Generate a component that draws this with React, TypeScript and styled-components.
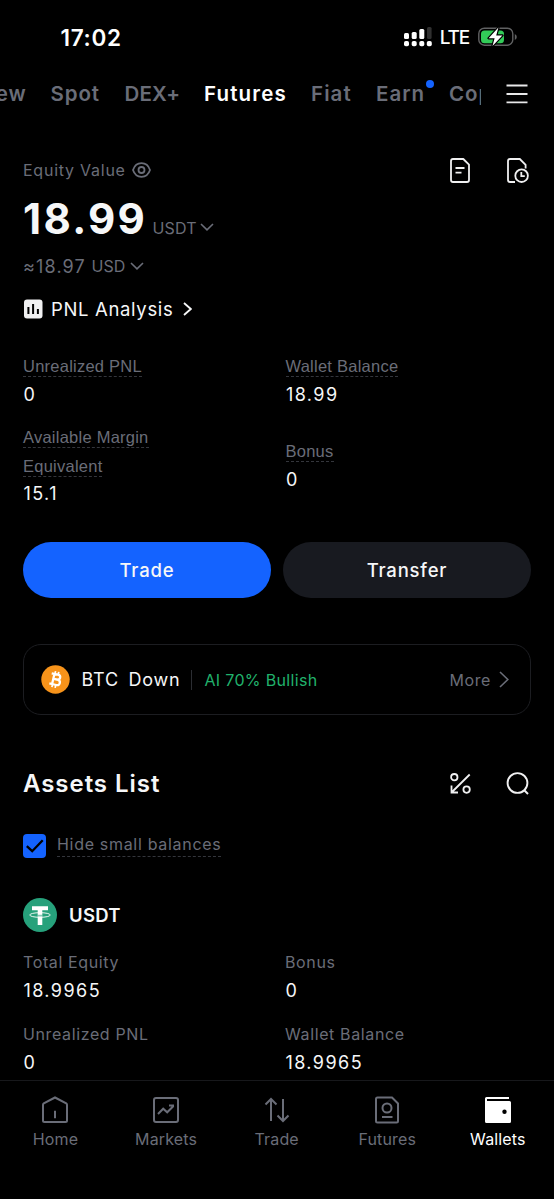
import React from "react";
import styled, { createGlobalStyle } from "styled-components";

const GlobalStyle = createGlobalStyle`
  * { box-sizing: border-box; }
  body { margin: 0; background: #000; }
`;

const gray = "#6a6d78";
const white = "#f6f7f8";

const Screen = styled.div`
  width: 554px;
  height: 1199px;
  overflow: hidden;
  display: flex;
  flex-direction: column;
  background: #000;
  color: ${white};
  font-family: Inter, "Liberation Sans", sans-serif;
  white-space: nowrap;
`;

const StatusBar = styled.div`
  height: 74px;
  flex: none;
  display: flex;
  align-items: center;
  justify-content: space-between;
  padding: 0 37px 0 60.5px;
`;

const Clock = styled.span`
  font-size: 22.5px;
  font-weight: 600;
  letter-spacing: 0.7px;
  color: #fff;
`;

const StatusIcons = styled.div`
  display: flex;
  align-items: center;
`;

const Carrier = styled.span`
  font-size: 19px;
  font-weight: 500;
  letter-spacing: -1.2px;
  color: #fff;
  margin: 1px 9px 0 7.5px;
`;

const TabBar = styled.nav`
  height: 39px;
  flex: none;
  display: flex;
  align-items: center;
  padding-right: 26px;
  justify-content: space-between;
`;

const TabStrip = styled.div`
  width: 481px;
  height: 39px;
  overflow: hidden;
  display: flex;
  align-items: center;
  gap: 24px;
`;

const Tab = styled.span<{ $active?: boolean; $width: number; $track?: number }>`
  flex: none;
  width: ${(p) => p.$width}px;
  display: flex;
  position: relative;
  font-size: 20.5px;
  font-weight: 600;
  letter-spacing: ${(p) => p.$track ?? 0.9}px;
  color: ${(p) => (p.$active ? "#fff" : gray)};
`;

const CutTab = styled(Tab)`
  justify-content: flex-end;
`;

const TabDot = styled.i`
  position: absolute;
  right: -9px;
  top: -1px;
  width: 8px;
  height: 8px;
  border-radius: 50%;
  background: #1463ff;
`;

const Content = styled.main`
  flex: 1;
  min-height: 0;
  overflow: hidden;
  padding: 41px 23px 0;
`;

const EquityRow = styled.div`
  height: 32px;
  display: flex;
  align-items: center;
  justify-content: space-between;
  padding-right: 2px;
`;

const Caption = styled.span`
  font-size: 16px;
  letter-spacing: 0.75px;
  color: ${gray};
`;

const Inline = styled.div<{ $gap: number }>`
  display: flex;
  align-items: center;
  gap: ${(p) => p.$gap}px;
`;

const Balance = styled.div`
  height: 62px;
  display: flex;
  align-items: baseline;
  padding-top: 7px;
`;

const BalanceValue = styled.span`
  font-size: 42px;
  line-height: 52px;
  font-weight: 700;
  letter-spacing: 2.3px;
  margin-right: 5.5px;
`;

const Currency = styled.span<{ $gap?: number }>`
  font-size: 16px;
  letter-spacing: 0.1px;
  color: ${gray};
  margin-right: ${(p) => p.$gap ?? 5}px;
`;

const FiatRow = styled.div`
  height: 36px;
  display: flex;
  align-items: center;
  color: ${gray};
`;

const FiatValue = styled.span`
  font-size: 18px;
  letter-spacing: 1.15px;
  margin-right: 5.5px;
`;

const PnlLink = styled.div`
  height: 49px;
  display: flex;
  align-items: center;
  font-size: 18.5px;
  letter-spacing: 0.66px;
`;

const PnlText = styled.span`
  margin: 0 10px 0 8px;
`;

const StatGrid = styled.div<{ $top: number }>`
  display: grid;
  grid-template-columns: 262.5px 1fr;
  align-items: center;
  row-gap: 14.5px;
  margin-top: ${(p) => p.$top}px;
`;

const StatLabel = styled.div`
  width: 140px;
  white-space: normal;
  font-family: "Liberation Sans", Arial, sans-serif;
  font-size: 16.5px;
  line-height: 28.5px;
  letter-spacing: 0.24px;
  color: ${gray};
`;

const Dashed = styled.span`
  padding-bottom: 1px;
  border-bottom: 1px dashed #34363c;
`;

const StatValue = styled.div`
  font-size: 18px;
  line-height: 28px;
  letter-spacing: 1.45px;
  text-indent: 0.4px;
`;

const Actions = styled.div`
  display: grid;
  grid-template-columns: 1fr 1fr;
  gap: 12px;
  margin-top: 33.5px;
`;

const ActionButton = styled.button<{ $primary?: boolean }>`
  height: 56.5px;
  padding: 0;
  border: 0;
  border-radius: 29px;
  background: ${(p) => (p.$primary ? "#1463ff" : "#181a20")};
  color: ${white};
  font: 450 18.5px Inter, sans-serif;
  letter-spacing: 0.8px;
`;

const SignalCard = styled.div`
  height: 71px;
  margin-top: 46px;
  padding: 0 21px 0 16.5px;
  display: flex;
  align-items: center;
  border: 1.5px solid #1c1d21;
  border-radius: 18px;
`;

const SignalName = styled.span`
  margin-left: 12px;
  display: flex;
  gap: 9.5px;
  font-size: 18px;
  letter-spacing: 0.8px;
`;

const Divider = styled.i`
  width: 1px;
  height: 20px;
  margin: 0 12px 0 11px;
  background: #2b2d32;
`;

const Bullish = styled.span`
  flex: 1;
  font-size: 16px;
  letter-spacing: 0.33px;
  color: #20b26c;
`;

const SectionHead = styled.div`
  height: 40px;
  margin-top: 48.5px;
  display: flex;
  align-items: center;
  justify-content: space-between;
  padding-right: 2px;
`;

const SectionTitle = styled.h2`
  margin: 0;
  font-size: 24px;
  font-weight: 600;
  letter-spacing: 0.95px;
`;

const FilterRow = styled.label`
  height: 26px;
  margin-top: 29px;
  display: flex;
  align-items: center;
  gap: 11px;
`;

const FilterText = styled.span`
  height: 24px;
  margin-top: -1px;
  font-size: 16px;
  line-height: 23px;
  letter-spacing: 0.69px;
  color: ${gray};
  border-bottom: 1px dashed #34363c;
`;

const CoinRow = styled.div`
  height: 36px;
  margin-top: 38.5px;
  display: flex;
  align-items: center;
  gap: 12px;
  font-size: 18.5px;
  font-weight: 600;
  letter-spacing: 0.3px;
`;

const AssetGrid = styled(StatGrid)`
  grid-template-columns: 262px 1fr;
`;

const AssetLabel = styled.div`
  font-size: 16px;
  line-height: 29.5px;
  letter-spacing: 0.62px;
  color: ${gray};
`;

const BottomNav = styled.nav`
  height: 119px;
  flex: none;
  display: grid;
  grid-template-columns: repeat(5, 110.6px);
  border-top: 1px solid #17181b;
`;

const NavItem = styled.div<{ $active?: boolean }>`
  display: flex;
  flex-direction: column;
  align-items: center;
  padding: 15px 0 0 0.4px;
  gap: 3px;
  font-size: 16px;
  line-height: 24px;
  letter-spacing: 0.15px;
  color: ${(p) => (p.$active ? "#fff" : gray)};
`;

const Chevron = ({ down = false, w, h, sw = 1.6 }: { down?: boolean; w: number; h: number; sw?: number }) => (
  <svg width={w} height={h} fill="none" stroke="currentColor" strokeWidth={sw}>
    <path d={down ? `M1 1L${w / 2} ${h - 1.2}L${w - 1} 1` : `M1 1L${w - 1.2} ${h / 2}L1 ${h - 1}`} />
  </svg>
);

const GrayChevron = styled.span<{ $drop?: number }>`
  display: flex;
  align-self: center;
  padding-top: ${(p) => p.$drop ?? 0}px;
  color: ${gray};
`;

const More = styled.span`
  margin-right: 8px;
  font-size: 16px;
  letter-spacing: 0.6px;
  color: ${gray};
`;

const Signal = () => (
  <svg width="28" height="20" fill="#fff">
    <rect x="0" y="6" width="5" height="6" rx="1.5" />
    <rect x="7.7" y="5" width="5" height="7" rx="1.5" />
    <rect x="15.3" y="2" width="5" height="10" rx="1.5" />
    <rect x="23" y="0" width="4.6" height="12" rx="1.5" fill="#303030" />
    {[0, 7.7, 15.3, 22.8].map((x) => (
      <rect key={x} x={x} y="14" width="5" height="5.2" rx="1.8" />
    ))}
  </svg>
);

const Battery = () => (
  <svg width="39" height="20" viewBox="0 0 39 20">
    <rect x="0.8" y="1.2" width="34" height="17" rx="5.5" fill="none" stroke="#606162" strokeWidth="1.4" />
    <path d="M36.8 7v6q2-1 2-3t-2-3Z" fill="#606162" />
    <rect x="3" y="3.4" width="23" height="12.8" rx="3.5" fill="#32cc58" />
    <path d="M20.4.6 10.6 11.2h6L14.5 19 24.4 8.4h-6.2Z" fill="#fff" stroke="#000" strokeWidth="2.4" paintOrder="stroke" strokeLinejoin="round" />
  </svg>
);

const MenuIcon = () => (
  <svg width="22" height="20" stroke="#e8e8e9" strokeWidth="1.9">
    <path d="M.5 1.5h21M.5 10h21M.5 18.4h21" />
  </svg>
);

const EyeIcon = () => (
  <svg width="19" height="16" viewBox="0 0 19 16" fill="none" stroke={gray} strokeWidth="1.8">
    <path d="M1 8C2.5 3.5 5.5 1.2 9.5 1.2S16.5 3.5 18 8C16.5 12.5 13.5 14.8 9.5 14.8S2.5 12.5 1 8Z" />
    <circle cx="9.5" cy="8" r="3" />
  </svg>
);

const DocIcon = () => (
  <svg width="20" height="25" viewBox="0 0 20 25" fill="none" stroke="#f0f0f1" strokeWidth="1.8" strokeLinejoin="round">
    <path d="M3 1h10.3L19 6.700V22q0 2-2 2H3q-2 0-2-2V3q0-2 2-2Z" />
    <path d="M5.5 10h9M5.5 14.600h6" />
  </svg>
);

const HistoryIcon = () => (
  <svg width="22" height="25" viewBox="0 0 22 25" fill="none" stroke="#f0f0f1" strokeWidth="1.8">
    <path d="M8 24H3q-2 0-2-2V3q0-2 2-2h9.8L18.6 6.800V10.500" />
    <circle cx="14.6" cy="17.700" r="6.300" />
    <path d="M14.300 14v4.200h3.500" />
  </svg>
);

const ChartBadge = () => (
  <svg width="20" height="20" viewBox="0 0 20 20">
    <rect x="1" y=".5" width="18.500" height="19" rx="3" fill="#f0f0f1" />
    <path d="M5.400 8v7M10.100 5v10M14.900 10v5" stroke="#000" strokeWidth="2" />
  </svg>
);

const BitcoinIcon = () => (
  <svg width="29" height="29" viewBox="0 0 29 29">
    <circle cx="14.500" cy="14.500" r="14.200" fill="#f7931a" />
    <g transform="rotate(13 14.500 14.500)" fill="none" stroke="#fff" strokeWidth="2.300">
      <path d="M9.400 9.300H15.800Q18.600 9.300 18.600 11.700T15.800 14.200H12M12 14.200H16.400Q19.500 14.200 19.500 17T16.400 19.700H9.400M12.200 9.300V19.700" />
      <path d="M12.700 6.300v3M16 6.300v3M12.700 19.700v3M16 19.700v3" strokeWidth="1.700" />
    </g>
  </svg>
);

const FeeIcon = () => (
  <svg width="21" height="21" viewBox="0 0 21 21" fill="none" stroke="#f0f0f1" strokeWidth="1.800">
    <circle cx="4.300" cy="4.200" r="3.200" />
    <circle cx="16.600" cy="16.600" r="3.200" />
    <path d="M19.700 1.500 2 19M1.500 12.500V19.500H8" />
  </svg>
);

const SearchIcon = () => (
  <svg width="23" height="23" viewBox="0 0 23 23" fill="none" stroke="#f0f0f1" strokeWidth="1.900">
    <circle cx="11.500" cy="11" r="9.900" />
    <path d="m18 18 4 4" />
  </svg>
);

const CheckIcon = () => (
  <svg width="23" height="24" viewBox="0 0 23 24">
    <rect width="23" height="24" rx="4" fill="#1463ff" />
    <path d="m3.800 12.200 5.400 5 10.500-11" fill="none" stroke="#000" strokeWidth="2.300" />
  </svg>
);

const TetherIcon = () => (
  <svg width="34" height="34" viewBox="0 0 34 34">
    <circle cx="17" cy="17" r="17" fill="#26a17b" />
    <path d="M9 8.300h16v4H19.300V27h-4.600V12.300H9Z" fill="#fff" />
    <ellipse cx="17" cy="17" rx="10.300" ry="2.300" fill="none" stroke="#fff" strokeWidth=".9" />
    <path d="M14.700 16.800v1.700q2.300.2 4.600 0v-1.700Z" fill="#26a17b" opacity=".55" />
  </svg>
);

const NavIcon = ({ name }: { name: string }) => (
  <svg width="28" height="28" viewBox="0 0 28 28" fill="none" stroke="currentColor" strokeWidth="2">
    {name === "Home" && (
      <path d="M2 8.800Q2 8 2.800 7.400L14 1.500l11.200 5.900q.8.600.8 1.400V24.500q0 1.500-1.500 1.500h-21Q2 26 2 24.500ZM14 14.800v7.500" />
    )}
    {name === "Markets" && (
      <>
        <rect x="2" y="2" width="24" height="24" rx="2" />
        <path d="m6 18 5.200-5.300 4 3.600L21.500 10M17 9.500h5" />
      </>
    )}
    {name === "Trade" && <path d="M8 25V3M2.500 8.500 8 3l5.500 5.500M20 3v22M14.500 19.500 20 25l5.500-5.500" />}
    {name === "Futures" && (
      <>
        <path d="M4.500 1.500H19L25 7.500V25q0 1.500-1.500 1.500h-19Q3 26.500 3 25V3q0-1.500 1.500-1.500Z" />
        <circle cx="14" cy="12" r="4.500" />
        <path d="M9 21h10.500" />
      </>
    )}
    {name === "Wallets" && (
      <>
        <path d="M1 2.500Q1 1 2.500 1H25V3H3V5H25.500Q27 5 27 6.500V25.500Q27 27 25.500 27h-23Q1 27 1 25.500Z" fill="currentColor" stroke="none" />
        <circle cx="20.500" cy="15.700" r="2.200" fill="#000" stroke="none" />
      </>
    )}
  </svg>
);

const stats = [
  ["Unrealized PNL", "0"],
  ["Wallet Balance", "18.99"],
  ["Available Margin Equivalent", "15.1"],
  ["Bonus", "0"],
];

const assetStats = [
  ["Total Equity", "18.9965"],
  ["Bonus", "0"],
  ["Unrealized PNL", "0"],
  ["Wallet Balance", "18.9965"],
];

const navItems = ["Home", "Markets", "Trade", "Futures", "Wallets"];

export default function App() {
  return (
    <Screen>
      <GlobalStyle />
      <StatusBar>
        <Clock>17:02</Clock>
        <StatusIcons>
          <Signal />
          <Carrier>LTE</Carrier>
          <Battery />
        </StatusIcons>
      </StatusBar>
      <TabBar>
        <TabStrip>
          <CutTab $width={26.5}>Overview</CutTab>
          <Tab $width={50}>Spot</Tab>
          <Tab $width={55.5} $track={0.2}>DEX+</Tab>
          <Tab $width={83} $track={1.15} $active>Futures</Tab>
          <Tab $width={41} $track={1.1}>Fiat</Tab>
          <Tab $width={49} $track={1}>Earn<TabDot /></Tab>
          <Tab $width={60}>Copy</Tab>
        </TabStrip>
        <MenuIcon />
      </TabBar>
      <Content>
        <EquityRow>
          <Inline $gap={6.5}>
            <Caption>Equity Value</Caption>
            <EyeIcon />
          </Inline>
          <Inline $gap={37}>
            <DocIcon />
            <HistoryIcon />
          </Inline>
        </EquityRow>
        <Balance>
          <BalanceValue>18.99</BalanceValue>
          <Currency $gap={3.5}>USDT</Currency>
          <GrayChevron $drop={13.5}><Chevron down w={14} h={8} /></GrayChevron>
        </Balance>
        <FiatRow>
          <FiatValue>≈18.97</FiatValue>
          <Currency>USD</Currency>
          <GrayChevron><Chevron down w={14} h={8} /></GrayChevron>
        </FiatRow>
        <PnlLink>
          <ChartBadge />
          <PnlText>PNL Analysis</PnlText>
          <Chevron w={9} h={14} sw={1.8} />
        </PnlLink>
        <StatGrid $top={19}>
          {stats.map(([label, value]) => (
            <div key={label}>
              <StatLabel><Dashed>{label}</Dashed></StatLabel>
              <StatValue>{value}</StatValue>
            </div>
          ))}
        </StatGrid>
        <Actions>
          <ActionButton $primary>Trade</ActionButton>
          <ActionButton>Transfer</ActionButton>
        </Actions>
        <SignalCard>
          <BitcoinIcon />
          <SignalName>
            <span>BTC</span>
            <span>Down</span>
          </SignalName>
          <Divider />
          <Bullish>AI 70% Bullish</Bullish>
          <More>More</More>
          <GrayChevron><Chevron w={10} h={17} /></GrayChevron>
        </SignalCard>
        <SectionHead>
          <SectionTitle>Assets List</SectionTitle>
          <Inline $gap={35}>
            <FeeIcon />
            <SearchIcon />
          </Inline>
        </SectionHead>
        <FilterRow>
          <CheckIcon />
          <FilterText>Hide small balances</FilterText>
        </FilterRow>
        <CoinRow>
          <TetherIcon />
          USDT
        </CoinRow>
        <AssetGrid $top={14.7}>
          {assetStats.map(([label, value], i) => (
            <div key={i}>
              <AssetLabel>{label}</AssetLabel>
              <StatValue>{value}</StatValue>
            </div>
          ))}
        </AssetGrid>
      </Content>
      <BottomNav>
        {navItems.map((name) => (
          <NavItem key={name} $active={name === "Wallets"}>
            <NavIcon name={name} />
            {name}
          </NavItem>
        ))}
      </BottomNav>
    </Screen>
  );
}
